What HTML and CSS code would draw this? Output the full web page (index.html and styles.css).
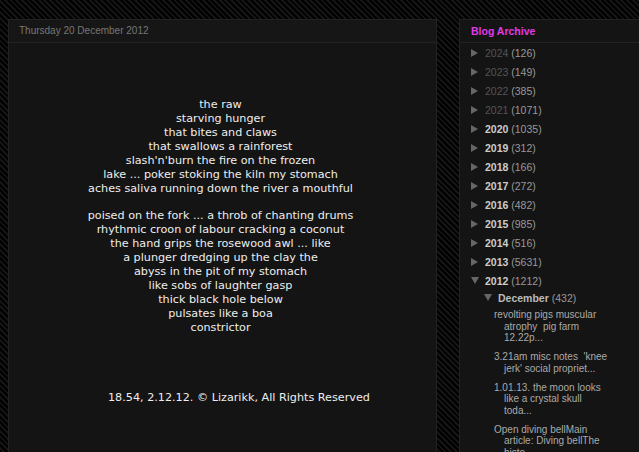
FILE: index.html
```html
<!DOCTYPE html>
<html>
<head>
  <link rel="stylesheet" href="styles.css">
</head>
<body>
    <div class="page">
        <div class="main">
            <div class="post">
                <h2 class="date-header">Thursday 20 December 2012</h2>
                <div class="post-body">
                    <div class="poem">
                        <p>the raw<br>
                        starving hunger<br>
                        that bites and claws<br>
                        that swallows a rainforest<br>
                        slash'n'burn the fire on the frozen<br>
                        lake ... poker stoking the kiln my stomach<br>
                        aches saliva running down the river a mouthful</p>
                        <p>poised on the fork ... a throb of chanting drums<br>
                        rhythmic croon of labour cracking a coconut<br>
                        the hand grips the rosewood awl ... like<br>
                        a plunger dredging up the clay the<br>
                        abyss in the pit of my stomach<br>
                        like sobs of laughter gasp<br>
                        thick black hole below<br>
                        pulsates like a boa<br>
                        constrictor</p>
                    </div>
                    <p class="sig">18.54, 2.12.12. &copy; Lizarikk, All Rights Reserved</p>
                </div>
            </div>
        </div>

        <div class="sidebar">
            <h2 class="widget-title">Blog Archive</h2>
            <ul class="archive">
                <li class="dim"><span class="toggle"></span><a href="#">2024</a> <span class="count">(126)</span></li>
                <li class="dim"><span class="toggle"></span><a href="#">2023</a> <span class="count">(149)</span></li>
                <li class="dim"><span class="toggle"></span><a href="#">2022</a> <span class="count">(385)</span></li>
                <li class="dim"><span class="toggle"></span><a href="#">2021</a> <span class="count">(1071)</span></li>
                <li><span class="toggle"></span><a href="#">2020</a> <span class="count">(1035)</span></li>
                <li><span class="toggle"></span><a href="#">2019</a> <span class="count">(312)</span></li>
                <li><span class="toggle"></span><a href="#">2018</a> <span class="count">(166)</span></li>
                <li><span class="toggle"></span><a href="#">2017</a> <span class="count">(272)</span></li>
                <li><span class="toggle"></span><a href="#">2016</a> <span class="count">(482)</span></li>
                <li><span class="toggle"></span><a href="#">2015</a> <span class="count">(985)</span></li>
                <li><span class="toggle"></span><a href="#">2014</a> <span class="count">(516)</span></li>
                <li><span class="toggle"></span><a href="#">2013</a> <span class="count">(5631)</span></li>
                <li class="open"><span class="toggle"></span><a href="#">2012</a> <span class="count">(1212)</span>
                    <ul class="months">
                        <li class="open"><span class="toggle"></span><a href="#">December</a> <span class="count">(432)</span>
                            <ul class="posts">
                                <li><a href="#">revolting pigs muscular atrophy&nbsp; pig farm 12.22p...</a></li>
                                <li><a href="#">3.21am misc notes&nbsp; 'knee jerk' social propriet...</a></li>
                                <li><a href="#">1.01.13. the moon looks like a crystal skull toda...</a></li>
                                <li><a href="#">Open diving bellMain article: Diving bellThe histo...</a></li>
                            </ul>
                        </li>
                    </ul>
                </li>
            </ul>
        </div>
    </div>
</body>
</html>
```

FILE: styles.css
```css
html, body {
  margin: 0;
  height: 100%;
  overflow: hidden;
}

body {
  background: repeating-linear-gradient(45deg, #000 0px, #000 2px, #141414 2px, #141414 4px);
  font-family: "Liberation Sans", Arial, sans-serif;
}

.page {
  display: flex;
  gap: 22px;
  padding: 19px 0 0 8px;
  width: 700px;
}

.main {
  width: 429px;
  flex-shrink: 0;
}

.post {
  background-color: #141414;
  border: 1px solid #222;
  min-height: 600px;
}

.date-header {
  margin: 0;
  height: 22px;
  line-height: 22px;
  padding: 0 10px;
  font-size: 10px;
  font-weight: normal;
  color: #777;
  background-color: #161616;
  border-bottom: 1px solid #222;
}

.post-body {
  padding: 55px 0 0 0;
  font-family: "DejaVu Sans", Verdana, sans-serif;
  font-size: 11.2px;
  line-height: 14px;
  color: #eee;
}

.poem {
  text-align: center;
  padding-right: 4px;
}

.poem p {
  margin: 0 0 13px 0;
}

.sig {
  margin: 56px 0 0 0;
  padding-left: 99px;
}

.sidebar {
  width: 220px;
  flex-shrink: 0;
  background-color: #141414;
  border: 1px solid #222;
  min-height: 600px;
}

.widget-title {
  margin: 0;
  height: 22px;
  line-height: 22px;
  padding: 0 11px;
  font-size: 10.5px;
  font-weight: bold;
  color: #e33ae3;
  border-bottom: 1px solid #222;
}

.archive, .archive ul {
  list-style: none;
  margin: 0;
  padding: 0;
}

.archive {
  padding: 1px 0 0 11px;
  font-size: 10.5px;
  line-height: 19px;
}

.archive a {
  text-decoration: none;
  color: #ccc;
  font-weight: bold;
}

.archive .dim > a {
  color: #555;
  font-weight: normal;
}

.count {
  color: #999;
}

.toggle {
  display: inline-block;
  width: 0;
  height: 0;
  border-left: 7px solid #666;
  border-top: 4px solid transparent;
  border-bottom: 4px solid transparent;
  margin-right: 7px;
  vertical-align: 0;
}

.open > .toggle {
  border-left: 4px solid transparent;
  border-right: 4px solid transparent;
  border-top: 7px solid #666;
  border-bottom: 0;
  margin-right: 6px;
  vertical-align: 1px;
}

.months {
  padding-left: 13px !important;
  line-height: 14px;
}

.months > li > a {
  color: #bbb;
}

.posts {
  padding: 4px 0 0 10px !important;
  width: 118px;
}

.posts li {
  font-size: 10px;
  line-height: 11.5px;
  padding: 0 0 7.5px 10px;
  text-indent: -10px;
}

.posts a {
  color: #aaa !important;
  font-weight: normal !important;
}
```
